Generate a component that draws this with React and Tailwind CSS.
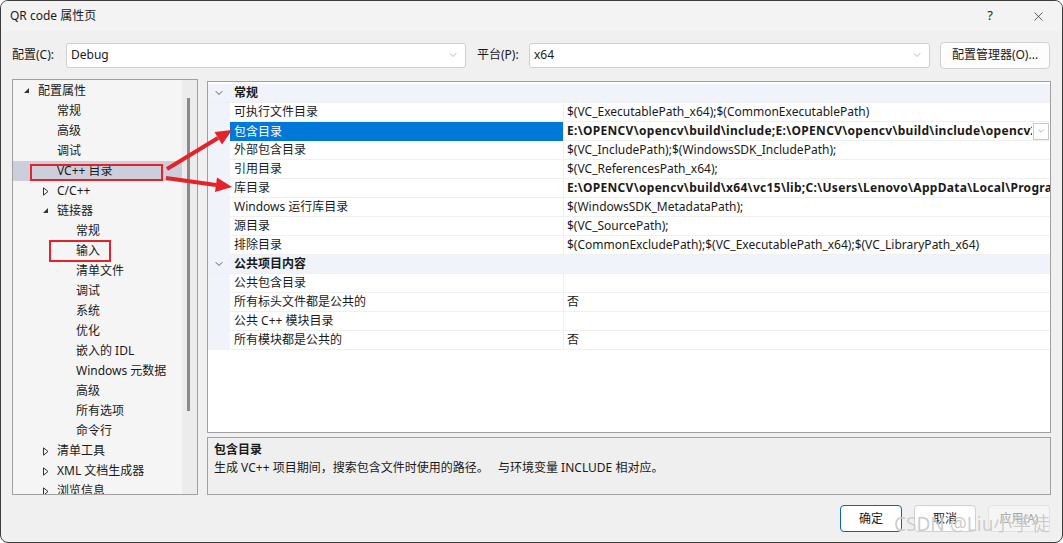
import React from "react";
import { X, ChevronDown } from "lucide-react";

const treeItems = [
  { label: "配置属性", level: 0, arrow: "open" },
  { label: "常规", level: 1 },
  { label: "高级", level: 1 },
  { label: "调试", level: 1 },
  { label: "VC++ 目录", level: 1, selected: true },
  { label: "C/C++", level: 1, arrow: "closed" },
  { label: "链接器", level: 1, arrow: "open" },
  { label: "常规", level: 2 },
  { label: "输入", level: 2 },
  { label: "清单文件", level: 2 },
  { label: "调试", level: 2 },
  { label: "系统", level: 2 },
  { label: "优化", level: 2 },
  { label: "嵌入的 IDL", level: 2 },
  { label: "Windows 元数据", level: 2 },
  { label: "高级", level: 2 },
  { label: "所有选项", level: 2 },
  { label: "命令行", level: 2 },
  { label: "清单工具", level: 1, arrow: "closed" },
  { label: "XML 文档生成器", level: 1, arrow: "closed" },
  { label: "浏览信息", level: 1, arrow: "closed" },
];

const gridRows = [
  { category: "常规" },
  { name: "可执行文件目录", value: "$(VC_ExecutablePath_x64);$(CommonExecutablePath)" },
  { name: "包含目录", value: "E:\\OPENCV\\opencv\\build\\include;E:\\OPENCV\\opencv\\build\\include\\opencv2;$(IncludePath)", bold: true, selected: true },
  { name: "外部包含目录", value: "$(VC_IncludePath);$(WindowsSDK_IncludePath);" },
  { name: "引用目录", value: "$(VC_ReferencesPath_x64);" },
  { name: "库目录", value: "E:\\OPENCV\\opencv\\build\\x64\\vc15\\lib;C:\\Users\\Lenovo\\AppData\\Local\\Programs\\Python\\libs;$(LibraryPath)", bold: true },
  { name: "Windows 运行库目录", value: "$(WindowsSDK_MetadataPath);" },
  { name: "源目录", value: "$(VC_SourcePath);" },
  { name: "排除目录", value: "$(CommonExcludePath);$(VC_ExecutablePath_x64);$(VC_LibraryPath_x64)" },
  { category: "公共项目内容" },
  { name: "公共包含目录", value: "" },
  { name: "所有标头文件都是公共的", value: "否" },
  { name: "公共 C++ 模块目录", value: "" },
  { name: "所有模块都是公共的", value: "否" },
];

const TreeArrow = ({ type }) =>
  type === "open" ? (
    <svg width="7" height="7" viewBox="0 0 7 7">
      <path d="M6 1 L6 6 L1 6 Z" fill="#333" />
    </svg>
  ) : (
    <svg width="7" height="9" viewBox="0 0 7 9">
      <path d="M1.5 0.8 L6 4.5 L1.5 8.2 Z" fill="none" stroke="#333" strokeWidth="1" />
    </svg>
  );

const Combo = ({ value, width }) => (
  <div className={`${width} h-[25px] bg-white border border-[#cfcfcf] rounded-[3px] flex items-center pl-[4px] pr-[6px]`}>
    <span className="flex-1">{value}</span>
    <ChevronDown size={12} strokeWidth={1} color="#777" />
  </div>
);

export default function App() {
  return (
    <div className="relative w-[1063px] h-[543px] overflow-hidden bg-[#f0f0f0] border border-[#3c3c3c] rounded-[8px] text-[12px] text-[#1a1a1a] font-['Noto_Sans','Noto_Sans_CJK_SC',sans-serif]">
      {/* title bar */}
      <div className="h-[30px] bg-[#f3f3f3] flex items-center pl-[9px] pr-[16px]">
        <span className="flex-1">QR code 属性页</span>
        <span className="text-[13px] mr-[38px]">?</span>
        <X size={15} strokeWidth={1.1} />
      </div>

      {/* config row */}
      <div className="mt-[11px] h-[26px] flex items-center pl-[11px]">
        <span className="w-[54px]">配置(C):</span>
        <Combo value="Debug" width="w-[400px]" />
        <span className="ml-[11px] w-[52px]">平台(P):</span>
        <Combo value="x64" width="w-[401px]" />
        <div className="ml-[10px] w-[110px] h-[27px] bg-[#fdfdfd] border border-[#d0d0d0] rounded-[4px] flex items-center justify-center">
          配置管理器(O)...
        </div>
      </div>

      {/* main */}
      <div className="mt-[11px] flex pl-[11px]">
        {/* tree */}
        <div className="w-[186px] h-[416px] border border-[#a0a0a0] bg-[#f5f5f5] flex overflow-hidden">
          <div className="flex-1 overflow-hidden pt-[1px]">
            {treeItems.map((it, i) => (
              <div
                key={i}
                className={`h-[20px] flex items-center whitespace-nowrap relative ${it.selected ? "bg-[#cccedb]" : ""}`}
                style={{ paddingLeft: 25 + it.level * 19 }}
              >
                {it.arrow && (
                  <span className="absolute top-[6px]" style={{ left: 10 + it.level * 19 }}>
                    <TreeArrow type={it.arrow} />
                  </span>
                )}
                {it.label}
              </div>
            ))}
          </div>
          <div className="w-[15px] bg-[#ececec] relative">
            <div className="absolute left-[5px] top-[18px] w-[3px] h-[313px] bg-[#8a8a8a]" />
          </div>
        </div>

        {/* right column */}
        <div className="ml-[9px] w-[844px] pt-[2px] flex flex-col">
          <div className="h-[352px] border border-[#a0a0a0] bg-white overflow-hidden pt-[2px]">
            {gridRows.map((r, i) =>
              r.category ? (
                <div key={i} className="h-[19px] bg-[#f0f3f9] flex items-center border-b border-[#f0f0f0]">
                  <div className="w-[22px] flex justify-center">
                    <ChevronDown size={12} strokeWidth={1.6} color="#333" />
                  </div>
                  <span className="pl-[4px] font-bold">{r.category}</span>
                </div>
              ) : (
                <div key={i} className="h-[19px] flex">
                  <div className="w-[22px] bg-[#f0f3f9]" />
                  <div
                    className={`w-[334px] flex items-center pl-[4px] border-r border-[#f0f0f0] ${
                      r.selected ? "bg-[#0078d7] text-white" : "border-b"
                    }`}
                  >
                    {r.name}
                  </div>
                  <div className="flex-1 min-w-0 flex items-center pl-[3px] border-b border-[#f0f0f0]">
                    <div
                      className={`flex-1 min-w-0 overflow-hidden whitespace-nowrap ${r.bold ? "font-bold tracking-[0.3px]" : ""}`}
                    >
                      {r.value}
                    </div>
                    {r.selected && (
                      <div className="ml-[1px] mr-[1px] w-[16px] h-[17px] bg-white border border-[#c8c8c8] flex items-center justify-center shrink-0">
                        <ChevronDown size={10} strokeWidth={1.2} color="#666" />
                      </div>
                    )}
                  </div>
                </div>
              )
            )}
          </div>

          {/* description */}
          <div className="mt-[4px] h-[58px] border border-[#a0a0a0] bg-[#efefef] px-[6px] pt-[2px]">
            <div className="font-bold leading-[19px]">包含目录</div>
            <div className="leading-[18px] whitespace-pre">生成 VC++ 项目期间，搜索包含文件时使用的路径。   与环境变量 INCLUDE 相对应。</div>
          </div>
        </div>
      </div>

      {/* buttons */}
      <div className="mt-[10px] flex justify-end gap-[12px] pr-[12px]">
        <div className="w-[62px] h-[27px] bg-white border border-[#0067c0] rounded-[4px] flex items-center justify-center">确定</div>
        <div className="w-[62px] h-[27px] bg-[#fdfdfd] border border-[#d0d0d0] rounded-[4px] flex items-center justify-center">取消</div>
        <div className="w-[62px] h-[27px] bg-[#f5f5f5] border border-[#e3e3e3] rounded-[4px] flex items-center justify-center text-[#a0a0a0]">应用(A)</div>
      </div>

      {/* annotations */}
      <svg className="absolute left-0 top-0 pointer-events-none" width="1063" height="543">
        <rect x="30" y="164" width="131" height="15" fill="none" stroke="#e3222a" strokeWidth="2" />
        <rect x="49" y="240" width="60" height="20" fill="none" stroke="#e3222a" strokeWidth="2" />
        <line x1="166" y1="168" x2="217" y2="137" stroke="#e3222a" strokeWidth="4" />
        <polygon points="231,129 221,143.5 213.5,131" fill="#e3222a" />
        <line x1="165" y1="177" x2="215" y2="184" stroke="#e3222a" strokeWidth="4" />
        <polygon points="231,186 214,191 216,176.5" fill="#e3222a" />
      </svg>

      {/* watermark */}
      <div className="absolute left-[893px] top-[509px] text-[19px] text-[#8c8c8c]/45 whitespace-nowrap [text-shadow:0_0_1px_#ffffff]">
        CSDN @Liu小学徒
      </div>
    </div>
  );
}
